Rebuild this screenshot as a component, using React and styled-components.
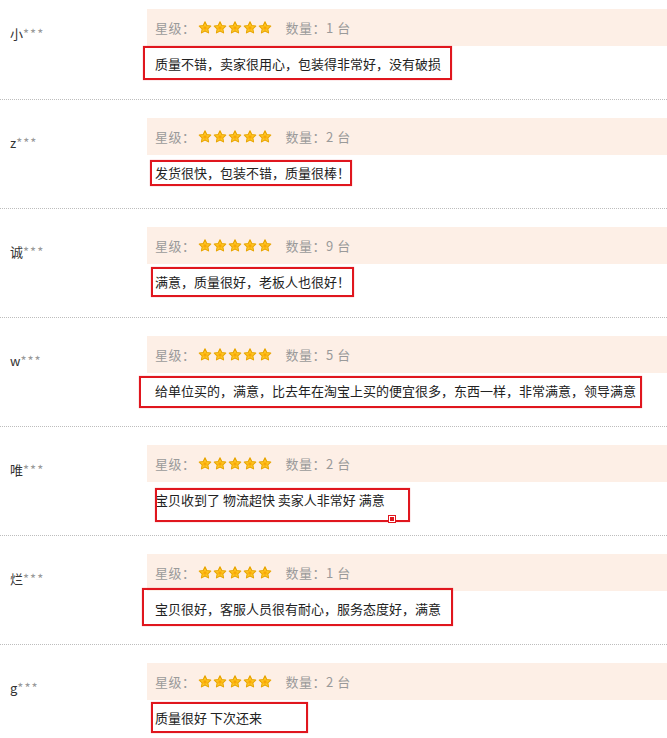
import React from 'react';
import styled, { createGlobalStyle } from 'styled-components';

const Global = createGlobalStyle`
  html, body {
    margin: 0;
    padding: 0;
    overflow: hidden;
    background: #fff;
  }
  body {
    font-family: "Noto Sans CJK SC", "Liberation Sans", sans-serif;
  }
`;

const List = styled.div`
  width: 667px;
  margin-top: -9px;
`;

const Item = styled.div`
  display: flex;
  box-sizing: border-box;
  height: 109px;
  padding-top: 18px;
  border-bottom: 1px dotted #bdbdbd;
`;

const User = styled.div`
  width: 137px;
  flex: none;
  padding: 17px 0 0 10px;
  font-size: 13px;
  line-height: 16px;
  color: #333;
`;

const Stars3 = styled.span`
  color: #999;
  letter-spacing: 1px;
`;

const Body = styled.div`
  flex: 1;
  display: flex;
  flex-direction: column;
`;

const Head = styled.div`
  height: 37px;
  background: #fdefe6;
  display: flex;
  align-items: center;
  padding-left: 8px;
  font-size: 13px;
  letter-spacing: 0.5px;
  color: #9a9a9a;
`;

const Rate = styled.span`
  display: flex;
  gap: 1px;
  margin: 0 14px 0 2px;
`;

const Comment = styled.div`
  position: relative;
  padding: 10px 0 0 8px;
  font-size: 13px;
  line-height: 16px;
  letter-spacing: 0;
  color: #222;
  white-space: nowrap;
`;

const Mark = styled.div`
  position: absolute;
  box-sizing: border-box;
  border: 2px solid #e0161e;
  box-shadow: 0 0 1px rgba(224, 22, 30, 0.5);
  left: ${p => p.$x}px;
  top: ${p => p.$y}px;
  width: ${p => p.$w}px;
  height: ${p => p.$h}px;
`;

const Dot = styled.div`
  position: absolute;
  width: 6px;
  height: 6px;
  background: #e0161e;
  border: 1px solid #fff;
  outline: 1px solid #e0161e;
  box-sizing: border-box;
  left: ${p => p.$x}px;
  bottom: -2px;
`;

const Star = () => (
  <svg width="14" height="13" viewBox="0 0 26 24">
    <defs>
      <radialGradient id="sg" cx="0.5" cy="0.55" r="0.6">
        <stop offset="0" stopColor="#f59a00" />
        <stop offset="0.35" stopColor="#ffc21a" />
        <stop offset="1" stopColor="#ffe46a" />
      </radialGradient>
    </defs>
    <path
      d="M13 1.5l3.3 6.9 7.4 1-5.4 5.2 1.3 7.4L13 18.4 6.4 22l1.3-7.4L2.3 9.4l7.4-1z"
      fill="url(#sg)"
      stroke="#e8a400"
      strokeWidth="2"
      strokeLinejoin="round"
    />
  </svg>
);

const reviews = [
  { name: '小', qty: 1, text: '质量不错，卖家很用心，包装得非常好，没有破损', box: [-4, 0, 309, 34] },
  { name: 'z', qty: 2, text: '发货很快，包装不错，质量很棒！', box: [3, 5, 202, 26] },
  { name: '诚', qty: 9, text: '满意，质量很好，老板人也很好！', box: [4, 3, 203, 30] },
  { name: 'w', qty: 5, text: '给单位买的，满意，比去年在淘宝上买的便宜很多，东西一样，非常满意，领导满意', box: [-8, 3, 503, 32] },
  { name: '唯', qty: 2, text: '宝贝收到了 物流超快 卖家人非常好 满意', box: [8, 6, 255, 34], dot: 232 },
  { name: '烂', qty: 1, text: '宝贝很好，客服人员很有耐心，服务态度好，满意', box: [-5, -3, 311, 38] },
  { name: 'g', qty: 2, text: '质量很好 下次还来', box: [4, 2, 157, 31] },
];

const Review = ({ r }) => {
  const [x, y, w, h] = r.box;
  return (
    <Item>
      <User>
        {r.name}<Stars3>***</Stars3>
      </User>
      <Body>
        <Head>
          星级：
          <Rate>
            {[0, 1, 2, 3, 4].map(i => <Star key={i} />)}
          </Rate>
          数量：{r.qty} 台
        </Head>
        <Comment>
          {r.text}
          <Mark $x={x} $y={y} $w={w} $h={h}>
            {r.dot != null && <Dot $x={r.dot} />}
          </Mark>
        </Comment>
      </Body>
    </Item>
  );
};

export default function App() {
  return (
    <>
      <Global />
      <List>
        {reviews.map((r, i) => <Review key={i} r={r} />)}
      </List>
    </>
  );
}
